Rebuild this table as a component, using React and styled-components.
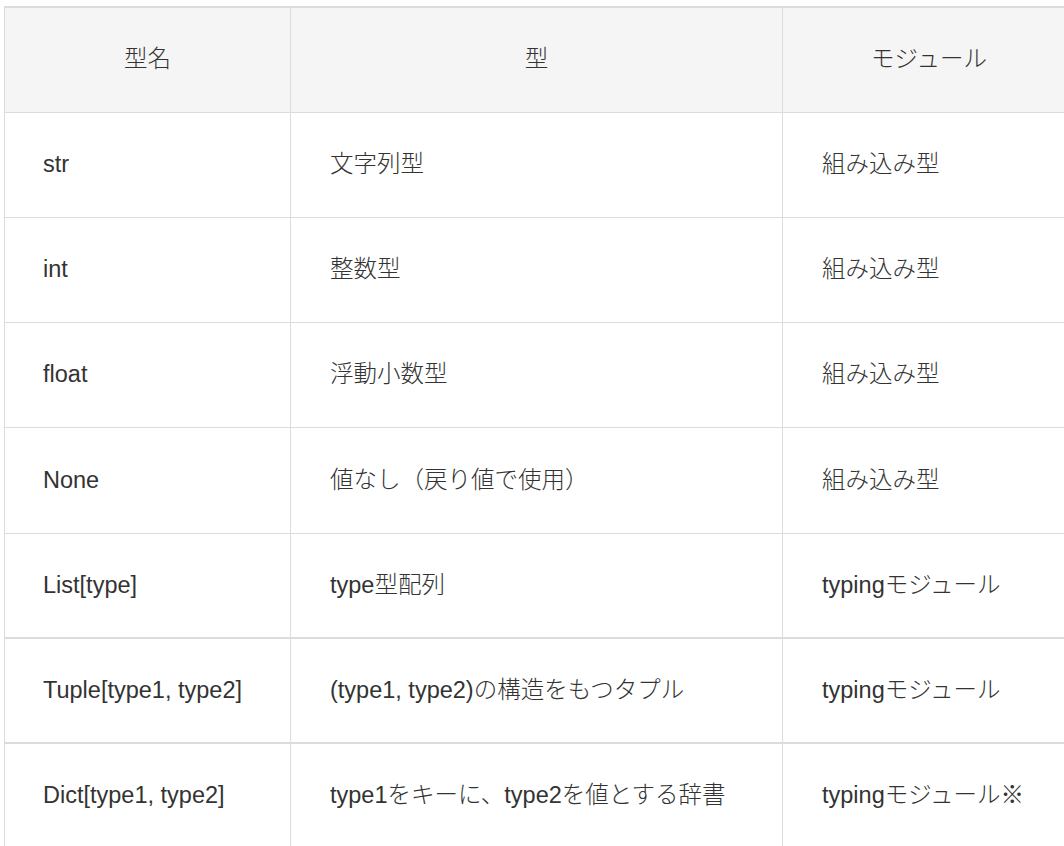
import React from 'react';
import styled, { createGlobalStyle } from 'styled-components';

const GlobalStyle = createGlobalStyle`
  html, body {
    margin: 0;
    padding: 0;
    background: #fff;
    overflow: hidden;
  }
`;

const Page = styled.div`
  width: 1064px;
  height: 846px;
  overflow: hidden;
  padding: 6px 0 0 4px;
  box-sizing: border-box;
`;

const Table = styled.table`
  width: 1071px;
  border-collapse: collapse;
  table-layout: fixed;
  font-family: "Liberation Sans", "Noto Sans CJK JP", sans-serif;
  font-size: 23.5px;
  font-weight: 300;
  line-height: 35px;
  color: #333;
  border-top: 2px solid #dcdcdc;
  border-left: 1px solid #dcdcdc;
`;

const HeadCell = styled.th`
  background: #f5f5f5;
  font-weight: 300;
  text-align: center;
  height: 105px;
  padding: 0 38px;
  border-right: 1px solid #dcdcdc;
  border-bottom: 1px solid #dcdcdc;
  box-sizing: border-box;
`;

const Cell = styled.td`
  text-align: left;
  height: ${({ $tall }) => ($tall ? '106px' : '105px')};
  padding: 0 38px 0 ${({ $first }) => ($first ? '38px' : '39px')};
  border-right: 1px solid #dcdcdc;
  border-bottom: ${({ $thick }) => ($thick ? '2px' : '1px')} solid #dcdcdc;
  box-sizing: border-box;
  white-space: nowrap;
`;

const rows = [
  ['str', '文字列型', '組み込み型'],
  ['int', '整数型', '組み込み型'],
  ['float', '浮動小数型', '組み込み型'],
  ['None', '値なし（戻り値で使用）', '組み込み型'],
  ['List[type]', 'type型配列', 'typingモジュール'],
  ['Tuple[type1, type2]', '(type1, type2)の構造をもつタプル', 'typingモジュール'],
  ['Dict[type1, type2]', 'type1をキーに、type2を値とする辞書', 'typingモジュール※'],
];

const App = () => (
  <Page>
    <GlobalStyle />
    <Table>
      <colgroup>
        <col style={{ width: '286px' }} />
        <col style={{ width: '492px' }} />
        <col style={{ width: '293px' }} />
      </colgroup>
      <thead>
        <tr>
          <HeadCell>型名</HeadCell>
          <HeadCell>型</HeadCell>
          <HeadCell>モジュール</HeadCell>
        </tr>
      </thead>
      <tbody>
        {rows.map((row, i) => (
          <tr key={row[0]}>
            {row.map((text, j) => (
              <Cell key={j} $first={j === 0} $thick={i >= 4} $tall={i === 3}>
                {text}
              </Cell>
            ))}
          </tr>
        ))}
      </tbody>
    </Table>
  </Page>
);

export default App;
